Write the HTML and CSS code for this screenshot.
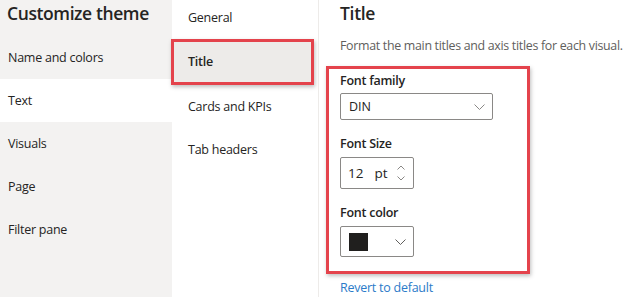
FILE: index.html
```html
<!DOCTYPE html>
<html lang="en">
<head>
    <meta charset="UTF-8">
    <meta name="viewport" content="width=device-width, initial-scale=1.0">
    <title>Customize theme</title>
    <link rel="stylesheet" href="styles.css">
</head>
<body>

    <div class="nav">
        <h1>Customize theme</h1>
        <div class="navItem">Name and colors</div>
        <div class="navItem active">Text</div>
        <div class="navItem">Visuals</div>
        <div class="navItem">Page</div>
        <div class="navItem">Filter pane</div>
    </div>

    <div class="subnav">
        <div class="subItem">General</div>
        <div class="subItem selected">Title</div>
        <div class="subItem">Cards and KPIs</div>
        <div class="subItem">Tab headers</div>
    </div>

    <div class="content">
        <h2>Title</h2>
        <p class="desc">Format the main titles and axis titles for each visual.</p>

        <div class="highlight">
            <label class="fieldLabel">Font family</label>
            <div class="dropdown">
                <span>DIN</span>
                <svg class="chevron" width="11" height="6" viewBox="0 0 11 6"><path d="M0.5 0.5 L5.5 5.5 L10.5 0.5" fill="none" stroke="#8a8886" stroke-width="1"/></svg>
            </div>

            <label class="fieldLabel second">Font Size</label>
            <div class="spin">
                <span class="num">12</span>
                <span class="unit">pt</span>
                <div class="arrows">
                    <svg width="8" height="5" viewBox="0 0 8 5"><path d="M0.5 4.5 L4 1 L7.5 4.5" fill="none" stroke="#8a8886" stroke-width="1"/></svg>
                    <svg width="8" height="5" viewBox="0 0 8 5"><path d="M0.5 0.5 L4 4 L7.5 0.5" fill="none" stroke="#8a8886" stroke-width="1"/></svg>
                </div>
            </div>

            <label class="fieldLabel second">Font color</label>
            <div class="colorPick">
                <span class="swatch"></span>
                <svg class="chevron" width="11" height="6" viewBox="0 0 11 6"><path d="M0.5 0.5 L5.5 5.5 L10.5 0.5" fill="none" stroke="#605e5c" stroke-width="1"/></svg>
            </div>
        </div>

        <a class="revert" href="#">Revert to default</a>
    </div>

</body>
</html>
```

FILE: styles.css
```css
body {
    margin: 0;
    width: 626px;
    height: 297px;
    overflow: hidden;
    display: flex;
    font-family: "Open Sans", "Noto Sans", sans-serif;
    color: #252423;
    background: white;
}
.nav {
    width: 172px;
    background-color: #f3f2f1;
    flex-shrink: 0;
}
h1 {
    margin: 0;
    height: 36px;
    line-height: 26px;
    padding-left: 7px;
    font-size: 17.5px;
    font-weight: 600;
    letter-spacing: -0.4px;
    white-space: nowrap;
}
.navItem {
    height: 43px;
    line-height: 43px;
    padding-left: 8px;
    font-size: 12.5px;
    letter-spacing: -0.25px;
}
.navItem.active {
    background: white;
}
.subnav {
    width: 146px;
    flex-shrink: 0;
    margin-top: -4px;
}
.subItem {
    height: 43px;
    line-height: 43px;
    padding-left: 16px;
    font-size: 12.5px;
    letter-spacing: -0.25px;
}
.subItem.selected {
    margin-left: -1px;
    margin-right: 4px;
    height: 40px;
    line-height: 40px;
    padding-left: 14px;
    border: 3px solid #e4434c;
    background: #edebe9;
    font-weight: 600;
    box-shadow: 1px 2px 4px rgba(0, 0, 0, 0.25);
}
.content {
    flex: 1;
    border-left: 1px solid #edebe9;
    padding-left: 7px;
}
h2 {
    margin: 0;
    height: 26px;
    line-height: 26px;
    padding-left: 14px;
    font-size: 17.5px;
    font-weight: 600;
    letter-spacing: -0.3px;
}
.desc {
    margin: 11px 0 0 14px;
    line-height: 18px;
    font-size: 12.4px;
    letter-spacing: -0.3px;
    color: #605e5c;
    white-space: nowrap;
}
.highlight {
    margin-top: 11px;
    width: 187px;
    border: 3px solid #e4434c;
    padding: 3px 0 14px 11px;
    box-shadow: 1px 2px 4px rgba(0, 0, 0, 0.25);
}
.fieldLabel {
    display: block;
    line-height: 18px;
    font-size: 12.5px;
    font-weight: 600;
    letter-spacing: -0.25px;
}
.fieldLabel.second {
    margin-top: 15px;
}
.dropdown {
    margin-top: 3px;
    width: 151px;
    height: 25px;
    border: 1px solid #8a8886;
    border-radius: 2px;
    display: flex;
    align-items: center;
    justify-content: space-between;
    font-size: 12.5px;
}
.dropdown span {
    padding-left: 8px;
}
.dropdown .chevron {
    margin-right: 7px;
}
.spin {
    margin-top: 4px;
    width: 72px;
    height: 30px;
    border: 1px solid #8a8886;
    border-radius: 2px;
    display: flex;
    align-items: center;
    font-size: 13.5px;
}
.spin .num {
    padding-left: 7px;
}
.spin .unit {
    padding-left: 11px;
}
.arrows {
    margin-left: auto;
    margin-right: 8px;
    display: flex;
    flex-direction: column;
    gap: 6px;
}
.arrows svg {
    display: block;
}
.colorPick {
    margin-top: 4px;
    width: 72px;
    height: 29px;
    border: 1px solid #8a8886;
    border-radius: 2px;
    display: flex;
    align-items: center;
    justify-content: space-between;
}
.swatch {
    margin-left: 8px;
    width: 19px;
    height: 18px;
    background: #201f1e;
}
.colorPick .chevron {
    margin-right: 7px;
}
.revert {
    display: block;
    margin: 5px 0 0 14px;
    line-height: 18px;
    font-size: 12.5px;
    letter-spacing: -0.25px;
    color: #2b7bc9;
    text-decoration: none;
}
```
